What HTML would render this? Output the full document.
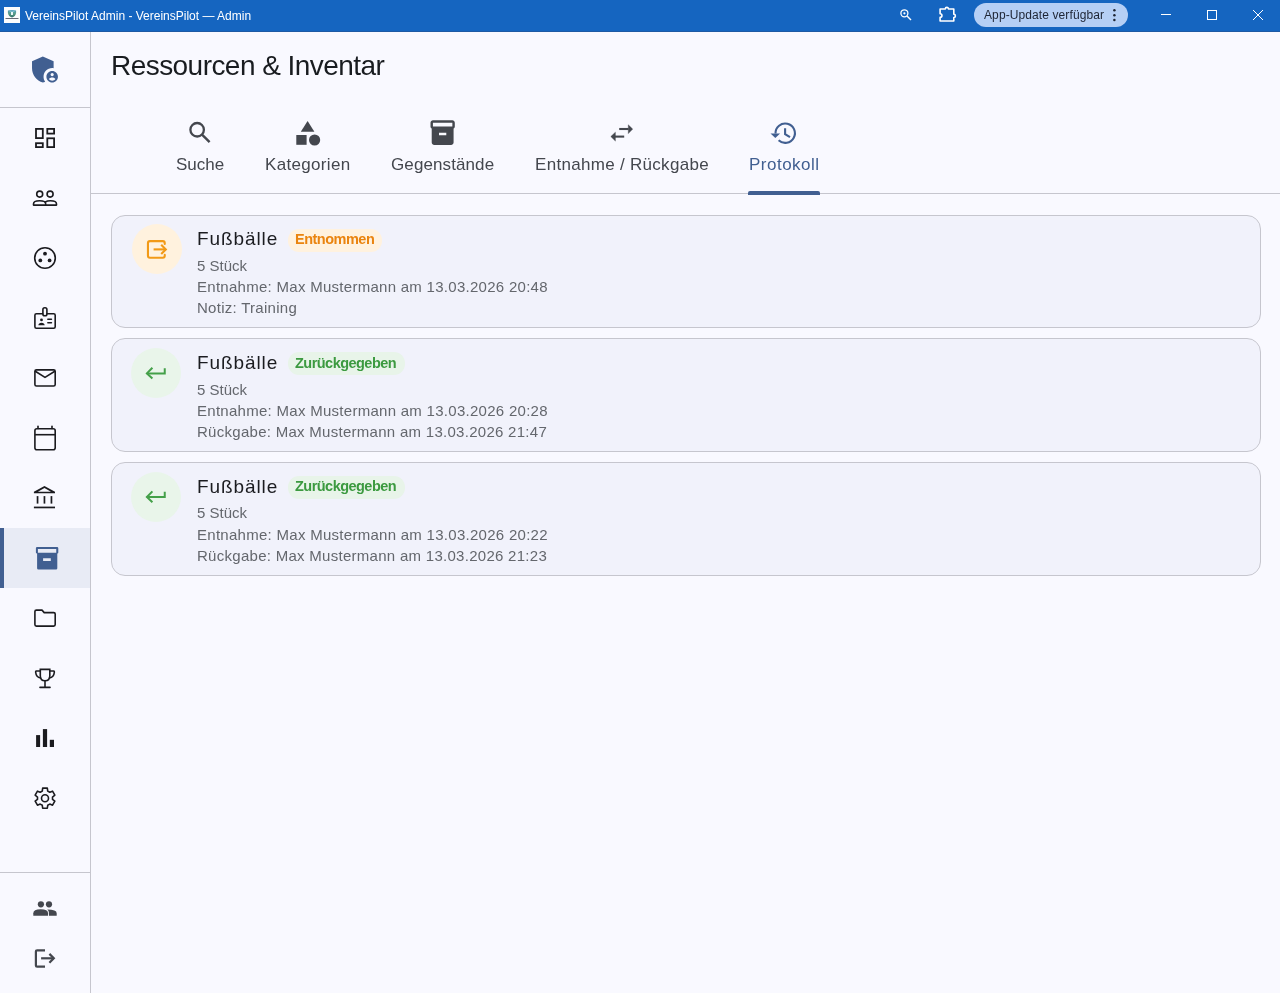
<!DOCTYPE html>
<html lang="de">
<head>
<meta charset="utf-8">
<title>VereinsPilot Admin</title>
<style>
html,body{margin:0;padding:0;}
body{width:1280px;height:993px;overflow:hidden;position:relative;background:#f9f9ff;font-family:"Liberation Sans",sans-serif;color:#191c20;}
.a{position:absolute;white-space:nowrap;}
.t{position:absolute;white-space:nowrap;line-height:1;will-change:transform;}
svg{position:absolute;overflow:visible;}
#titlebar{left:0;top:0;width:1280px;height:32px;background:#1565c0;box-shadow:inset 0 -1px 0 #1e5aa4;}
#side{left:0;top:32px;width:90px;height:961px;background:#f9f9ff;}
#sideborder{left:90px;top:32px;width:1px;height:961px;background:#c6c6ce;}
.hline{position:absolute;height:1px;background:#c6c6ce;}
.card{position:absolute;left:111px;width:1148px;border:1px solid #c6c6ce;border-radius:14px;background:#f1f2fb;box-sizing:content-box;}
.circ{position:absolute;width:50px;height:50px;border-radius:50%;}
.badge{position:absolute;height:23px;border-radius:11px;}
.btxt{font-weight:700;font-size:14.5px;}
.sub{color:#64676d;font-size:15px;}
.tab{color:#44474e;font-size:17px;}
</style>
</head>
<body>
<!-- title bar -->
<div class="a" id="titlebar"></div>
<div class="a" style="left:4px;top:7px;width:16px;height:16px;background:#fbfdfd;"></div>
<svg style="left:0;top:0" width="32" height="32" viewBox="0 0 32 32">
  <defs><linearGradient id="shg" x1="0" y1="0" x2="0" y2="1"><stop offset="0" stop-color="#4b9cc0"/><stop offset="0.5" stop-color="#5a9e88"/><stop offset="1" stop-color="#2f6f6a"/></linearGradient></defs><path d="M7.9 10.4 Q12 9.4 16.1 10.4 V12.8 Q15.8 16.3 12 17.5 Q8.2 16.3 7.9 12.8 Z" fill="url(#shg)"/>
  <path d="M9.5 11.6 Q12 10.8 14.5 11.6" stroke="#7fbfd0" stroke-width="1" fill="none"/>
  <rect x="11" y="12" width="2" height="3" fill="#e8f6f8"/>
  <rect x="5.5" y="18" width="13" height="0.9" fill="#555a66"/>
</svg>
<div class="t" style="left:25px;top:9.6px;font-size:12px;color:#ffffff;">VereinsPilot Admin - VereinsPilot — Admin</div>

<!-- title bar right -->
<svg style="left:0;top:0" width="1280" height="32" viewBox="0 0 1280 32">
  <g stroke="#ffffff" fill="none" stroke-width="1.3">
    <circle cx="904.4" cy="13.3" r="3.5"/>
    <line x1="907" y1="16" x2="911" y2="20" stroke-width="1.5"/>
  </g>
  <circle cx="904.4" cy="13.3" r="1.1" fill="#ffffff"/>
  <path d="M940.1 9 H945.3 A1.6 1.6 0 0 1 948.5 9 H953.8 V14.3 A1.6 1.6 0 0 1 953.8 17.5 V21 H940.1 V17.4 A1.8 1.8 0 0 0 940.1 13.7 Z" stroke="#ffffff" stroke-width="1.6" fill="none" stroke-linejoin="round"/>
  <rect x="974" y="3" width="154" height="24" rx="12" fill="#b5cff5"/>
  <g fill="#1d2433">
    <circle cx="1114.4" cy="10.3" r="1.25"/>
    <circle cx="1114.4" cy="15.2" r="1.25"/>
    <circle cx="1114.4" cy="20.1" r="1.25"/>
  </g>
  <g stroke="#ffffff" stroke-width="1" fill="none">
    <line x1="1161" y1="14.5" x2="1171" y2="14.5"/>
    <rect x="1207.5" y="10.5" width="9" height="9"/>
    <line x1="1253" y1="10" x2="1263" y2="20"/>
    <line x1="1263" y1="10" x2="1253" y2="20"/>
  </g>
</svg>
<div class="t" style="left:984px;top:9.2px;font-size:12px;letter-spacing:0.1px;color:#1d2433;">App-Update verfügbar</div>

<!-- sidebar -->
<div class="a" id="side"></div>
<div class="a" id="sideborder"></div>
<div class="hline" style="left:0;top:107px;width:90px;"></div>
<div class="hline" style="left:0;top:872px;width:90px;"></div>
<div class="a" style="left:0;top:528px;width:90px;height:60px;background:#e8ebf5;"></div>
<div class="a" style="left:0;top:528px;width:4px;height:60px;background:#415f91;"></div>

<svg style="left:0;top:0" width="91" height="993" viewBox="0 0 91 993">
  <!-- logo admin_panel_settings -->
  <g transform="translate(27.7 52.2) scale(1.44)" fill="#415f91">
    <path d="M17 11c.34 0 .67.04 1 .09V6.27L10.5 3 3 6.27v4.91c0 4.54 3.2 8.79 7.5 9.82.55-.13 1.08-.32 1.6-.55-.69-.98-1.1-2.17-1.1-3.45 0-3.31 2.69-6 6-6z"/>
    <path d="M17 13c-2.21 0-4 1.79-4 4s1.79 4 4 4 4-1.79 4-4-1.79-4-4-4zm0 1.38c.62 0 1.12.51 1.12 1.12s-.51 1.12-1.12 1.12-1.12-.51-1.12-1.12.5-1.12 1.12-1.12zm0 5.37c-.93 0-1.74-.46-2.24-1.17.05-.72 1.51-1.08 2.24-1.08s2.19.36 2.24 1.08c-.5.71-1.31 1.17-2.24 1.17z"/>
  </g>
  <g stroke="#1b1b1f" stroke-width="1.8" fill="none" stroke-linejoin="miter">
    <!-- dashboard -->
    <rect x="36" y="128.9" width="6.8" height="9.2"/>
    <rect x="47.3" y="128.9" width="6.8" height="4.7"/>
    <rect x="36" y="143.2" width="6.8" height="3.9"/>
    <rect x="47.3" y="138.3" width="6.8" height="8.8"/>
  </g>
  <g stroke="#1b1b1f" stroke-width="1.6" fill="none" stroke-linejoin="round" stroke-linecap="round">
    <!-- group outline -->
    <circle cx="39.7" cy="194.1" r="3.0"/>
    <circle cx="50.1" cy="194.1" r="3.0"/>
    <path d="M33.5 205.1 V204 C33.5 201.6 36.5 200.8 39.6 200.8 C42.7 200.8 45.7 201.6 45.7 204 V205.1 Z"/>
    <path d="M45.7 205.1 H56.5 V204 C56.5 201.6 53.5 200.8 50.4 200.8 C48.3 200.8 46.6 201.2 45.3 202"/>
    <!-- group_work -->
    <circle cx="45" cy="258" r="10.3"/>
    <!-- badge -->
    <path d="M42.6 313.7 H36.4 Q34.9 313.7 34.9 315.2 V326.7 Q34.9 328.2 36.4 328.2 H53.7 Q55.2 328.2 55.2 326.7 V315.2 Q55.2 313.7 53.7 313.7 H47.2"/>
    <rect x="42.9" y="307.8" width="4" height="7.9" rx="1.8"/>
    <line x1="47.8" y1="319.2" x2="51.5" y2="319.2" stroke-width="1.4"/>
    <line x1="47.8" y1="322.7" x2="51.5" y2="322.7" stroke-width="1.4"/>
    <!-- mail -->
    <rect x="34.9" y="369.9" width="20.3" height="16.1" rx="1.6"/>
    <polyline points="35.3,371.3 45,377.4 54.8,371.3"/>
    <!-- calendar -->
    <rect x="34.9" y="428.7" width="20.3" height="21" rx="2"/>
    <line x1="34.9" y1="434.7" x2="55.2" y2="434.7" stroke-linecap="butt"/>
    <line x1="38" y1="426.4" x2="38" y2="428.5"/>
    <line x1="52" y1="426.4" x2="52" y2="428.5"/>
    <!-- account_balance roof -->
    
    <!-- folder -->
    <path d="M36.4 610.1 H42 L44.2 612.6 H53.7 Q55.2 612.6 55.2 614.1 V624.6 Q55.2 626.1 53.7 626.1 H36.4 Q34.9 626.1 34.9 624.6 V611.6 Q34.9 610.1 36.4 610.1 Z"/>
    <!-- trophy -->
    <path d="M40.3 669.4 H49.8 V676 Q49.8 680.8 45 680.8 Q40.3 680.8 40.3 676 Z" stroke-linejoin="miter"/>
    <path d="M40.3 671 H36.2 Q35.6 671 35.7 672.5 Q36.2 677.2 40.6 678"/>
    <path d="M49.7 671 H53.8 Q54.4 671 54.3 672.5 Q53.8 677.2 49.4 678"/>
    <line x1="45" y1="681" x2="45" y2="687" stroke-linecap="butt"/>
    <line x1="40" y1="687.4" x2="50" y2="687.4"/>
    <!-- settings gear -->
    <circle cx="45" cy="798.2" r="3.5"/>
    <path d="M42.28 791.10 L42.68 788.16 L47.32 788.16 L47.72 791.10 L49.78 792.29 L52.53 791.18 L54.85 795.19 L52.51 797.01 L52.51 799.39 L54.85 801.21 L52.53 805.22 L49.78 804.11 L47.72 805.30 L47.32 808.24 L42.68 808.24 L42.28 805.30 L40.22 804.11 L37.47 805.22 L35.15 801.21 L37.49 799.39 L37.49 797.01 L35.15 795.19 L37.47 791.18 L40.22 792.29 Z"/>
  </g>
  <g fill="#1b1b1f">
    <circle cx="45" cy="253.7" r="1.9"/>
    <circle cx="40.3" cy="260.4" r="1.9"/>
    <circle cx="49.6" cy="260.4" r="1.9"/>
    <circle cx="41.5" cy="319.9" r="1.4"/>
    <path d="M38.3 325.3 Q38.6 322.8 41.5 322.8 Q44.4 322.8 44.7 325.3 Z"/>
    <rect x="36.7" y="496.1" width="1.7" height="7.5"/>
    <rect x="43.6" y="496.1" width="1.7" height="7.5"/>
    <rect x="50.6" y="496.1" width="1.7" height="7.5"/>
    <rect x="33.9" y="506.6" width="21.1" height="1.7"/>
    <path d="M33.9 493.3 V491.8 L44.45 485.9 L55 491.8 V493.3 Z M37.9 491.7 L44.45 488 L51 491.7 Z" fill-rule="evenodd"/>
    <!-- bar chart -->
    <rect x="36.1" y="735.1" width="4" height="11.9"/>
    <rect x="42.9" y="729.1" width="4.2" height="17.9"/>
    <rect x="49.8" y="739.8" width="4.2" height="7.2"/>
  </g>
  <!-- active inventory_2 -->
  <g fill="#415f91">
    <path d="M37.1 547.1 H57.1 Q58.3 547.1 58.3 548.3 V552.4 Q58.3 553.5 57.3 553.5 V568.2 Q57.3 569.5 56 569.5 H38.4 Q37.1 569.5 37.1 568.2 V553.5 Q35.9 553.5 35.9 552.4 V548.3 Q35.9 547.1 37.1 547.1 Z M37.9 549.1 V552.7 H56.25 V549.1 Z M43.1 558.2 V561 H50.8 V558.2 Z" fill-rule="evenodd"/>
  </g>
  <!-- bottom: people filled -->
  <g fill="#44474e">
    <circle cx="40.9" cy="904.3" r="3.1"/>
    <circle cx="49" cy="904.3" r="3.1"/>
    <path d="M33.3 915.7 V913.2 Q33.3 909.3 40.7 909.3 Q48.1 909.3 48.1 913.2 V915.7 Z"/>
    <path d="M49 915.7 V913.2 Q49 910.9 47.3 909.6 Q56.7 909.8 56.7 913.2 V915.7 Z"/>
  </g>
  <g stroke="#44474e" stroke-width="2.2" fill="none" stroke-linejoin="round">
    <path d="M45 950.3 H37.1 Q35.9 950.3 35.9 951.5 V965.5 Q35.9 966.7 37.1 966.7 H45" stroke-linecap="butt"/>
    <line x1="41.1" y1="958.3" x2="53.8" y2="958.3"/>
    <polyline points="49.4,953.9 53.8,958.3 49.4,962.7" stroke-linecap="butt" stroke-linejoin="miter"/>
  </g>
</svg>

<!-- header -->
<div class="t" style="left:111px;top:52.2px;font-size:28px;letter-spacing:-0.55px;color:#191c20;">Ressourcen &amp; Inventar</div>

<div class="hline" style="left:91px;top:193px;width:1189px;"></div>
<svg style="left:0;top:0" width="1280" height="200" viewBox="0 0 1280 200">
  <!-- search -->
  <g stroke="#44474e" fill="none" stroke-width="2.3">
    <circle cx="197.15" cy="129.75" r="6.75"/>
    <line x1="202.3" y1="134.9" x2="209.6" y2="142.2" stroke-width="2.4"/>
  </g>
  <!-- category -->
  <g fill="#44474e">
    <path d="M307.6 120.9 L314.4 131.7 H300.8 Z"/>
    <rect x="296.3" y="135" width="10.3" height="9.8"/>
    <circle cx="314.6" cy="140" r="5.6"/>
  </g>
  <!-- inventory_2 -->
  <g transform="translate(428.07 117.82) scale(1.215 1.24)" fill="#44474e">
    <path d="M20 2H4c-1 0-2 .9-2 2v3.01c0 .72.43 1.34 1 1.69V20c0 1.1 1.1 2 2 2h14c.9 0 2-.9 2-2V8.7c.57-.35 1-.97 1-1.69V4c0-1.1-1-2-2-2zm-5 12H9v-2h6v2zm5-7H4V4l16-.02V7z"/>
  </g>
  <!-- swap_horiz -->
  <g fill="#44474e" stroke="#44474e">
    <line x1="619.2" y1="129" x2="628.6" y2="129" stroke-width="2.1"/>
    <path d="M628.3 124.8 L632.7 129.1 L628.3 133.6 Z" stroke-width="0.4"/>
    <line x1="615" y1="136.6" x2="624.2" y2="136.6" stroke-width="2.1"/>
    <path d="M615.4 132.2 L610.8 136.6 L615.4 141.1 Z" stroke-width="0.4"/>
  </g>
  <!-- history -->
  <g stroke="#415f91" fill="none" stroke-width="2.1">
    <path d="M775.5 133.5 A9.7 9.7 0 1 1 778.6 140.3"/>
    <polyline points="785.1,128.3 785.1,134.2 790,137.2" stroke-linejoin="miter"/>
  </g>
  <path d="M770.5 133.4 H780.1 L775.3 138 Z" fill="#415f91"/>
  <!-- indicator -->
  <path d="M748 195 V193 Q748 191 750 191 H818 Q820 191 820 193 V195 Z" fill="#415f91"/>
</svg>
<div class="t tab" style="left:176px;top:155.5px;">Suche</div>
<div class="t tab" style="left:265px;top:155.5px;letter-spacing:0.32px;">Kategorien</div>
<div class="t tab" style="left:391px;top:155.5px;letter-spacing:0.1px;">Gegenstände</div>
<div class="t tab" style="left:534.6px;top:155.5px;letter-spacing:0.3px;">Entnahme / Rückgabe</div>
<div class="t tab" style="left:748.8px;top:155.5px;letter-spacing:0.49px;color:#415f91;">Protokoll</div>

<!-- CARDS -->
<div class="card" style="top:215px;height:111px;"></div>
<div class="circ" style="left:131.5px;top:224px;background:#fff2de;"></div>
<svg style="left:0;top:0" width="200" height="600" viewBox="0 0 200 600"><g stroke="#f29a16" stroke-width="2.1" fill="none" stroke-linecap="round" stroke-linejoin="round">
<path d="M164.75 244.00 V243.15 Q164.75 241.15 162.75 241.15 H149.95 Q147.95 241.15 147.95 243.15 V255.75 Q147.95 257.75 149.95 257.75 H162.75 Q164.75 257.75 164.75 255.75 V254.90"/>
<line x1="153.6" y1="249.40" x2="165" y2="249.40" stroke-linecap="butt"/>
<polyline points="161.2,244.85 165.8,249.40 161.2,253.95" stroke-linecap="butt" stroke-linejoin="miter"/>
</g></svg>
<div class="t" style="left:196.5px;top:229.22px;font-size:19px;letter-spacing:0.9px;color:#1b1c20;">Fußbälle</div>
<div class="badge" style="left:288px;top:228.5px;width:94px;background:#fff2df;"></div>
<div class="t btxt" style="left:295.2px;top:231.73px;color:#ea840f;letter-spacing:-0.5px;">Entnommen</div>
<div class="t sub" style="left:196.6px;top:257.90px;letter-spacing:0;">5 Stück</div>
<div class="t sub" style="left:196.6px;top:279.00px;letter-spacing:0.28px;">Entnahme: Max Mustermann am 13.03.2026 20:48</div>
<div class="t sub" style="left:196.6px;top:300.10px;letter-spacing:0.28px;">Notiz: Training</div>
<div class="card" style="top:338px;height:112px;"></div>
<div class="circ" style="left:131.3px;top:347.90px;background:#e9f5ea;"></div>
<svg style="left:0;top:0" width="200" height="600" viewBox="0 0 200 600"><g stroke="#44a049" stroke-width="2" fill="none">
<polyline points="152.4,367.75 146.9,373.40 152.4,378.60" stroke-linejoin="miter"/>
<polyline points="146.8,373.40 164.75,373.40 164.75,368.20" stroke-linejoin="miter"/>
</g></svg>
<div class="t" style="left:196.5px;top:353.12px;font-size:19px;letter-spacing:0.9px;color:#1b1c20;">Fußbälle</div>
<div class="badge" style="left:288px;top:352.4px;width:117px;background:#e8f4e9;"></div>
<div class="t btxt" style="left:295.2px;top:355.63px;color:#3c9a40;letter-spacing:-0.53px;">Zurückgegeben</div>
<div class="t sub" style="left:196.6px;top:381.80px;letter-spacing:0;">5 Stück</div>
<div class="t sub" style="left:196.6px;top:402.90px;letter-spacing:0.28px;">Entnahme: Max Mustermann am 13.03.2026 20:28</div>
<div class="t sub" style="left:196.6px;top:424.00px;letter-spacing:0.28px;">Rückgabe: Max Mustermann am 13.03.2026 21:47</div>
<div class="card" style="top:462px;height:112px;"></div>
<div class="circ" style="left:131.3px;top:471.50px;background:#e9f5ea;"></div>
<svg style="left:0;top:0" width="200" height="600" viewBox="0 0 200 600"><g stroke="#44a049" stroke-width="2" fill="none">
<polyline points="152.4,491.35 146.9,497.00 152.4,502.20" stroke-linejoin="miter"/>
<polyline points="146.8,497.00 164.75,497.00 164.75,491.80" stroke-linejoin="miter"/>
</g></svg>
<div class="t" style="left:196.5px;top:476.72px;font-size:19px;letter-spacing:0.9px;color:#1b1c20;">Fußbälle</div>
<div class="badge" style="left:288px;top:476.0px;width:117px;background:#e8f4e9;"></div>
<div class="t btxt" style="left:295.2px;top:479.23px;color:#3c9a40;letter-spacing:-0.53px;">Zurückgegeben</div>
<div class="t sub" style="left:196.6px;top:505.40px;letter-spacing:0;">5 Stück</div>
<div class="t sub" style="left:196.6px;top:526.50px;letter-spacing:0.28px;">Entnahme: Max Mustermann am 13.03.2026 20:22</div>
<div class="t sub" style="left:196.6px;top:547.60px;letter-spacing:0.28px;">Rückgabe: Max Mustermann am 13.03.2026 21:23</div>

</body>
</html>
